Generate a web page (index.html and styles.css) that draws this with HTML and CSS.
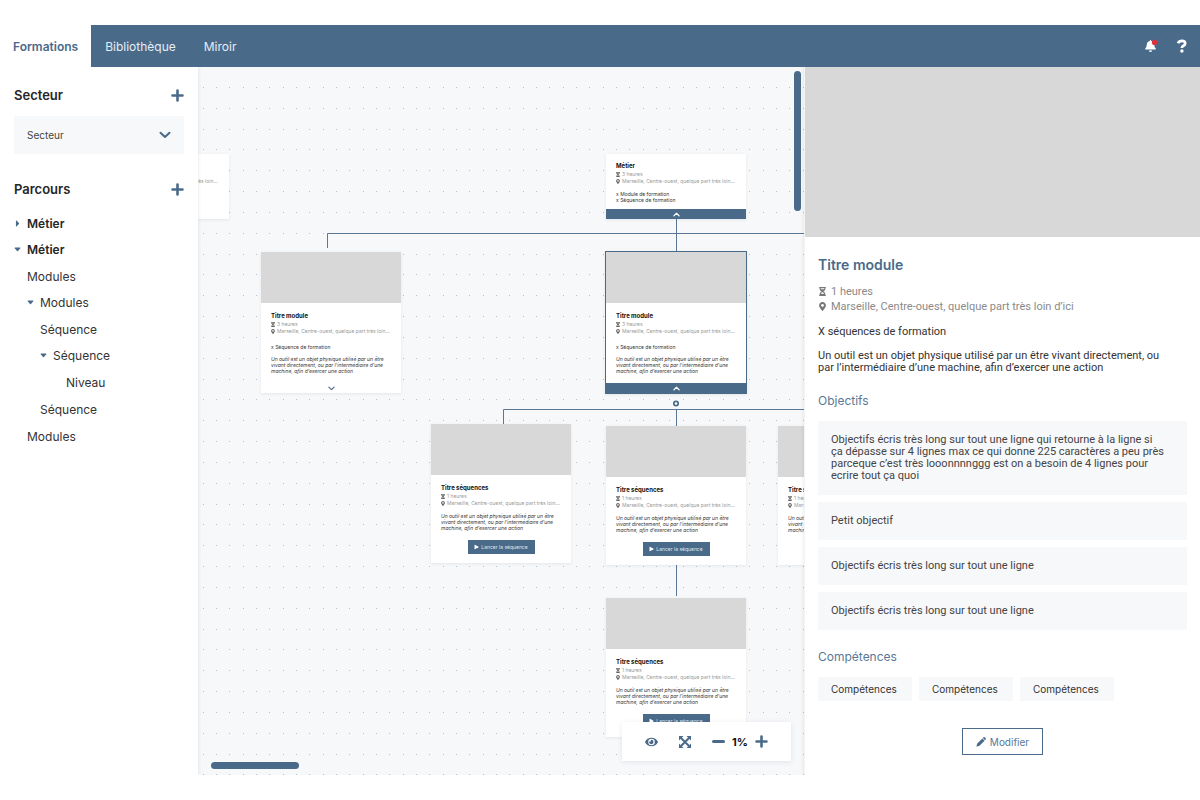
FILE: index.html
```html
<!DOCTYPE html>
<html lang="fr">
<head>
<meta charset="utf-8">
<meta name="viewport" content="width=device-width, initial-scale=1">
<title>Formations</title>
<link rel="stylesheet" href="styles.css">
</head>
<body>
<svg class="sprite" aria-hidden="true">
  <symbol id="plus" viewBox="0 0 12 12"><path d="M6 1.4v9.2M1.4 6h9.2" fill="none" stroke="currentColor" stroke-width="2.4" stroke-linecap="round"/></symbol>
  <symbol id="minus" viewBox="0 0 12 12"><path d="M1.4 6h9.2" fill="none" stroke="currentColor" stroke-width="2.800" stroke-linecap="round"/></symbol>
  <symbol id="down" viewBox="0 0 12 8"><path d="M1.5 1.7 6 6l4.500-4.300" fill="none" stroke="currentColor" stroke-width="2" stroke-linecap="round" stroke-linejoin="round"/></symbol>
  <symbol id="up" viewBox="0 0 12 8"><path d="M1.500 6.300 6 2l4.500 4.300" fill="none" stroke="currentColor" stroke-width="2.200" stroke-linecap="round" stroke-linejoin="round"/></symbol>
  <symbol id="caret-down" viewBox="0 0 8 6"><path d="M1.200.800h5.600q.8 0 .3.700L4.600 4.600q-.6.600-1.200 0L.900 1.500Q.4.800 1.200.800z" fill="currentColor"/></symbol>
  <symbol id="caret-right" viewBox="0 0 6 8"><path d="M1.200 1v6q0 .8.700.3l2.700-2.700q.6-.6 0-1.200L1.900.700Q1.200.200 1.200 1z" fill="currentColor"/></symbol>
  <symbol id="hourglass" viewBox="0 0 384 512"><path fill="currentColor" d="M360 64c13 0 24-11 24-24V24c0-13-11-24-24-24H24C11 0 0 11 0 24v16c0 13 11 24 24 24 0 91 51 167 121 192C75 281 24 357 24 448c-13 0-24 11-24 24v16c0 13 11 24 24 24h336c13 0 24-11 24-24v-16c0-13-11-24-24-24 0-91-51-167-121-192C309 231 360 155 360 64zM285 384H99c17-46 52-80 93-80s76 34 93 80zm0-256H99c-7-20-11-41-11-64h208c0 23-4 44-11 64z"/></symbol>
  <symbol id="pin" viewBox="0 0 384 512"><path fill="currentColor" fill-rule="evenodd" d="M172 502C27 291 0 270 0 192 0 86 86 0 192 0s192 86 192 192c0 78-27 99-172 310-9 13-31 13-40 0zM192 272a80 80 0 1 0 0-160 80 80 0 0 0 0 160z"/></symbol>
  <symbol id="play" viewBox="0 0 10 10"><path fill="currentColor" d="M1 .8Q1 0 1.800.400L9 4.400q.9.600 0 1.200L1.800 9.600Q1 10 1 9.200z"/></symbol>
  <symbol id="eye" viewBox="0 0 576 512"><path fill="currentColor" fill-rule="evenodd" d="M572 241C518 135 410 64 288 64S58 135 4 241a32 32 0 0 0 0 30c54 106 162 177 284 177s230-71 284-177a32 32 0 0 0 0-30zM288 400a144 144 0 1 1 0-288 144 144 0 0 1 0 288zm0-240c-13 0-25 2-37 6a48 48 0 0 1-67 67 96 96 0 1 0 104-73z"/></symbol>
  <symbol id="expand" viewBox="0 0 14 14"><path fill="none" stroke="currentColor" stroke-width="2" d="m3 3 8 8M11 3l-8 8"/><path fill="currentColor" d="M1 1h4.500L1 5.500zM13 1v4.500L8.500 1zM1 13V8.500L5.500 13zM13 13H8.500L13 8.500z"/></symbol>
  <symbol id="pencil" viewBox="0 0 12 12"><path fill="currentColor" d="M7.600 1.700 10.300 4.400 4.200 10.500l-3.200 1q-.6.100-.5-.5l1-3.200zM8.200 1.100l.8-.7q.8-.6 1.500 0l1.100 1.100q.6.700 0 1.500l-.7.800z"/></symbol>
</svg>

<div class="app">
  <header class="topbar">
    <nav class="tabs" aria-label="Principal">
      <a class="tab tab-active" href="#formations" aria-current="page">Formations</a>
      <a class="tab" href="#bibliotheque">Bibliothèque</a>
      <a class="tab" href="#miroir">Miroir</a>
    </nav>
    <div class="topbar-actions">
      <button class="icon-button" aria-label="Notifications">
        <svg class="icon-bell" viewBox="0 0 14 14"><path fill="#fff" d="M6.500 1q.7 0 .7.900 2.900.7 3 3.600.1 2.900 1.600 4.100.4.900-.5 1H1.700q-1-.2-.5-1 1.500-1.200 1.600-4.100.1-2.900 3-3.600 0-.9.700-.9zM4.900 11.500h3.200q-.2 1.600-1.600 1.600t-1.600-1.600z"/><circle cx="10.600" cy="3.400" r="2.700" fill="#e0303b"/></svg>
      </button>
      <button class="icon-button" aria-label="Aide">
        <svg class="icon-help" viewBox="0 0 12 14"><path fill="none" stroke="#fff" stroke-width="2.700" d="M2 4.300Q3 1.900 5.900 1.900q3.300 0 3.300 2.500 0 1.500-1.900 2.300Q5.900 7.400 5.900 9"/><circle cx="5.900" cy="12" r="1.700" fill="#fff"/></svg>
      </button>
    </div>
  </header>

  <div class="workspace">
    <aside class="sidebar">
      <div class="section-head">
        <h2 class="section-title"><label for="secteur">Secteur</label></h2>
        <button class="icon-button add" aria-label="Ajouter un secteur"><svg class="icon-plus"><use href="#plus"/></svg></button>
      </div>
      <div class="select-box">
        <select class="select" id="secteur"><option>Secteur</option></select>
        <svg class="select-arrow"><use href="#down"/></svg>
      </div>
      <div class="section-head">
        <h2 class="section-title">Parcours</h2>
        <button class="icon-button add" aria-label="Ajouter un parcours"><svg class="icon-plus"><use href="#plus"/></svg></button>
      </div>
      <ul class="tree">
        <li><button class="tree-row tree-strong" aria-expanded="false"><svg class="caret"><use href="#caret-right"/></svg>Métier</button></li>
        <li><button class="tree-row tree-strong" aria-expanded="true"><svg class="caret"><use href="#caret-down"/></svg>Métier</button>
          <ul class="branch">
            <li><button class="tree-row tree-leaf">Modules</button></li>
            <li><button class="tree-row" aria-expanded="true"><svg class="caret"><use href="#caret-down"/></svg>Modules</button>
              <ul class="branch">
                <li><button class="tree-row tree-leaf">Séquence</button></li>
                <li><button class="tree-row" aria-expanded="true"><svg class="caret"><use href="#caret-down"/></svg>Séquence</button>
                  <ul class="branch">
                    <li><button class="tree-row">Niveau</button></li>
                  </ul>
                </li>
                <li><button class="tree-row tree-leaf">Séquence</button></li>
              </ul>
            </li>
            <li><button class="tree-row tree-leaf">Modules</button></li>
          </ul>
        </li>
      </ul>
    </aside>

    <main class="canvas">
      <svg class="links" aria-hidden="true">
        <defs><pattern id="dots" width="40" height="125" patternUnits="userSpaceOnUse" x="5" y="20">
          <path stroke="#b9bfc6" stroke-width="1" stroke-dasharray="1 12 1 12 1 13" d="M0 .5h40M0 21.500h40M0 42.500h40M0 62.500h40M0 83.500h40M0 104.500h40"/>
        </pattern></defs>
        <rect width="100%" height="100%" fill="url(#dots)"/>
        <path class="wire" d="M478.500 152v32M129.500 181v-14.500H700M305.500 357v-14.500H700M478.500 342v17M478.500 498v31"/>
        <circle cx="478" cy="336.500" r="2.200" fill="#fff" stroke="#4a6a8a" stroke-width="1.700"/>
      </svg>

      <article class="node node-metier-a">
        <div class="node-body">
          <h3 class="node-title">Métier</h3>
          <p class="node-meta"><svg class="mini"><use href="#hourglass"/></svg>3 heures</p>
          <p class="node-meta"><svg class="mini"><use href="#pin"/></svg><span class="clip">Marseille, Centre-ouest, quelque part très loin d’ici</span></p>
          <p class="node-count">x Module de formation<br>x Séquence de formation</p>
        </div>
      </article>

      <article class="node node-metier-b">
        <div class="node-body">
          <h3 class="node-title">Métier</h3>
          <p class="node-meta"><svg class="mini"><use href="#hourglass"/></svg>3 heures</p>
          <p class="node-meta"><svg class="mini"><use href="#pin"/></svg><span class="clip">Marseille, Centre-ouest, quelque part très loin d’ici</span></p>
          <p class="node-count">x Module de formation<br>x Séquence de formation</p>
        </div>
        <button class="node-toggle node-toggle-open" aria-label="Replier"><svg class="mini-arrow"><use href="#up"/></svg></button>
      </article>

      <article class="node node-module-a">
        <div class="node-image"></div>
        <div class="node-body node-body-module">
          <h3 class="node-title">Titre module</h3>
          <p class="node-meta"><svg class="mini"><use href="#hourglass"/></svg>3 heures</p>
          <p class="node-meta"><svg class="mini"><use href="#pin"/></svg><span class="clip">Marseille, Centre-ouest, quelque part très loin d’ici</span></p>
          <p class="node-count">x Séquence de formation</p>
          <p class="node-text">Un outil est un objet physique utilisé par un être<br>vivant directement, ou par l’intermédiaire d’une<br>machine, afin d’exercer une action</p>
        </div>
        <button class="node-toggle" aria-label="Déplier"><svg class="mini-arrow"><use href="#down"/></svg></button>
      </article>

      <article class="node node-selected">
        <div class="node-image"></div>
        <div class="node-body node-body-module">
          <h3 class="node-title">Titre module</h3>
          <p class="node-meta"><svg class="mini"><use href="#hourglass"/></svg>3 heures</p>
          <p class="node-meta"><svg class="mini"><use href="#pin"/></svg><span class="clip">Marseille, Centre-ouest, quelque part très loin d’ici</span></p>
          <p class="node-count">x Séquence de formation</p>
          <p class="node-text">Un outil est un objet physique utilisé par un être<br>vivant directement, ou par l’intermédiaire d’une<br>machine, afin d’exercer une action</p>
        </div>
        <button class="node-toggle node-toggle-open" aria-label="Replier"><svg class="mini-arrow"><use href="#up"/></svg></button>
      </article>

      <article class="node node-seq-a">
        <div class="node-image"></div>
        <div class="node-body node-body-seq">
          <h3 class="node-title">Titre séquences</h3>
          <p class="node-meta"><svg class="mini"><use href="#hourglass"/></svg>1 heures</p>
          <p class="node-meta"><svg class="mini"><use href="#pin"/></svg><span class="clip">Marseille, Centre-ouest, quelque part très loin d’ici</span></p>
          <p class="node-text">Un outil est un objet physique utilisé par un être<br>vivant directement, ou par l’intermédiaire d’une<br>machine, afin d’exercer une action</p>
          <button class="launch"><svg class="mini"><use href="#play"/></svg>Lancer la séquence</button>
        </div>
      </article>

      <article class="node node-seq-b">
        <div class="node-image"></div>
        <div class="node-body node-body-seq">
          <h3 class="node-title">Titre séquences</h3>
          <p class="node-meta"><svg class="mini"><use href="#hourglass"/></svg>1 heures</p>
          <p class="node-meta"><svg class="mini"><use href="#pin"/></svg><span class="clip">Marseille, Centre-ouest, quelque part très loin d’ici</span></p>
          <p class="node-text">Un outil est un objet physique utilisé par un être<br>vivant directement, ou par l’intermédiaire d’une<br>machine, afin d’exercer une action</p>
          <button class="launch"><svg class="mini"><use href="#play"/></svg>Lancer la séquence</button>
        </div>
      </article>

      <article class="node node-seq-c">
        <div class="node-image"></div>
        <div class="node-body node-body-seq">
          <h3 class="node-title">Titre séquences</h3>
          <p class="node-meta"><svg class="mini"><use href="#hourglass"/></svg>1 heures</p>
          <p class="node-meta"><svg class="mini"><use href="#pin"/></svg><span class="clip">Marseille, Centre-ouest, quelque part très loin d’ici</span></p>
          <p class="node-text">Un outil est un objet physique utilisé par un être<br>vivant directement, ou par l’intermédiaire d’une<br>machine, afin d’exercer une action</p>
          <button class="launch"><svg class="mini"><use href="#play"/></svg>Lancer la séquence</button>
        </div>
      </article>

      <article class="node node-seq-d">
        <div class="node-image"></div>
        <div class="node-body node-body-seq">
          <h3 class="node-title">Titre séquences</h3>
          <p class="node-meta"><svg class="mini"><use href="#hourglass"/></svg>1 heures</p>
          <p class="node-meta"><svg class="mini"><use href="#pin"/></svg><span class="clip">Marseille, Centre-ouest, quelque part très loin d’ici</span></p>
          <p class="node-text">Un outil est un objet physique utilisé par un être<br>vivant directement, ou par l’intermédiaire d’une<br>machine, afin d’exercer une action</p>
          <button class="launch"><svg class="mini"><use href="#play"/></svg>Lancer la séquence</button>
        </div>
      </article>

      <div class="thumb thumb-y"></div>
      <div class="thumb thumb-x"></div>

      <div class="zoombar">
        <button class="icon-button" aria-label="Aperçu"><svg class="icon-eye"><use href="#eye"/></svg></button>
        <button class="icon-button" aria-label="Ajuster"><svg class="icon-expand"><use href="#expand"/></svg></button>
        <div class="zoom-level">
          <button class="icon-button" aria-label="Réduire"><svg class="icon-zoom"><use href="#minus"/></svg></button>
          <output class="zoom-value">1%</output>
          <button class="icon-button" aria-label="Agrandir"><svg class="icon-zoom"><use href="#plus"/></svg></button>
        </div>
      </div>
    </main>

    <aside class="panel">
      <div class="panel-image"></div>
      <div class="panel-body">
        <h2 class="panel-title">Titre module</h2>
        <p class="panel-meta"><svg class="meta-icon"><use href="#hourglass"/></svg>1 heures</p>
        <p class="panel-meta"><svg class="meta-icon"><use href="#pin"/></svg>Marseille, Centre-ouest, quelque part très loin d’ici</p>
        <p class="panel-text">X séquences de formation</p>
        <p class="panel-text">Un outil est un objet physique utilisé par un être vivant directement, ou<br>par l’intermédiaire d’une machine, afin d’exercer une action</p>
        <h3 class="panel-heading">Objectifs</h3>
        <ul class="goals">
          <li class="goal">Objectifs écris très long sur tout une ligne qui retourne à la ligne si<br>ça dépasse sur 4 lignes max ce qui donne 225 caractères a peu près<br>parceque c’est très looonnnnggg est on a besoin de 4 lignes pour<br>ecrire tout ça quoi</li>
          <li class="goal">Petit objectif</li>
          <li class="goal">Objectifs écris très long sur tout une ligne</li>
          <li class="goal">Objectifs écris très long sur tout une ligne</li>
        </ul>
        <h3 class="panel-heading">Compétences</h3>
        <ul class="skills">
          <li class="skill">Compétences</li>
          <li class="skill">Compétences</li>
          <li class="skill">Compétences</li>
        </ul>
        <button class="edit"><svg class="icon-pencil"><use href="#pencil"/></svg>Modifier</button>
      </div>
    </aside>
  </div>
</div>
</body>
</html>
```

FILE: styles.css
```css
* { box-sizing: border-box; }

body {
  margin: 0;
  background: #fff;
  color: #333;
  font-family: Inter, "Liberation Sans", sans-serif;
  font-size: 12px;
}

h2, h3, p, ul { margin: 0; padding: 0; }
ul { list-style: none; }
button, select { font: inherit; color: inherit; border: 0; padding: 0; background: none; cursor: pointer; }
svg { display: block; flex: none; }

.sprite { position: absolute; width: 0; height: 0; }

.app { display: flex; flex-direction: column; min-height: 100vh; padding: 25px 0; }

/* Top bar */
.topbar { display: flex; justify-content: space-between; min-height: 42px; background: #4a6a8a; }
.tabs { display: flex; }
.tab { display: flex; align-items: center; padding: 0 14px; color: #e6edf4; font-size: 12px; text-decoration: none; }
.tab-active { padding: 0 13px; background: #fff; color: #4a6a8a; font-weight: 600; }
.topbar-actions { display: flex; align-items: center; gap: 18px; padding-right: 12px; }
.icon-button { display: flex; align-items: center; justify-content: center; color: #4a6a8a; }
.icon-bell { width: 14px; height: 14px; }
.icon-help { width: 12px; height: 14px; }

.workspace { display: flex; flex: 1; }

/* Sidebar */
.sidebar { flex: none; width: 198px; padding: 18px 14px; background: #fff; box-shadow: 0 0 4px rgba(60, 80, 100, .16); clip-path: inset(0 -8px 0 0); z-index: 2; }
.section-head { display: flex; justify-content: space-between; align-items: center; height: 20px; }
.section-title { font-size: 13px; line-height: 20px; font-weight: 600; color: #262626; }
.icon-plus { width: 13px; height: 13px; }
.select-box { position: relative; margin: 11px 0 25px; }
.select { width: 100%; height: 38px; padding: 0 13px; appearance: none; background: #f7f8f9; font-size: 10px; color: #444; }
.select-arrow { position: absolute; right: 13px; top: 15px; width: 12px; height: 8px; color: #4a6a8a; pointer-events: none; }
.tree { margin-top: 11px; }
.branch { padding: 1px 0 1px 13px; }
.tree-row { display: flex; align-items: center; position: relative; height: 26px; padding-left: 13px; font-size: 12px; }
.tree-leaf { padding-left: 0; }
.tree-strong { font-weight: 600; color: #262626; }
.caret { position: absolute; left: 0; width: 7px; height: 7px; color: #4a6a8a; }

/* Canvas */
.canvas { position: relative; flex: 1; min-width: 0; overflow: hidden; background: #f7f8fa; }
.links { position: absolute; inset: 0; width: 100%; height: 100%; }
.wire { fill: none; stroke: #5a7896; stroke-width: 1; }

.node { position: absolute; width: 140px; background: #fff; box-shadow: 0 1px 3px rgba(60, 80, 100, .1); font-size: 5px; line-height: 6px; }
.node-metier-a { left: -109px; top: 87px; padding-bottom: 10px; }
.node-metier-b { left: 408px; top: 87px; }
.node-module-a { left: 63px; top: 185px; }
.node-selected { left: 407px; top: 184px; width: 142px; border: 1px solid #4a6a8a; }
.node-seq-a { left: 233px; top: 357px; }
.node-seq-b { left: 408px; top: 359px; }
.node-seq-c { left: 580px; top: 359px; }
.node-seq-d { left: 408px; top: 531px; }

.node-image { height: 51px; background: #d8d8d8; }
.node-body { display: flex; flex-direction: column; padding: 8px 10px 6px; }
.node-body-module { padding: 9px 10px; }
.node-body-seq { padding: 9px 10px; }
.node-title { margin-bottom: 1px; font-size: 6px; line-height: 8px; font-weight: 700; color: #111; }
.node-meta { display: flex; align-items: center; gap: 2px; line-height: 7px; color: #999; }
.mini { width: 4px; height: 5px; color: #666; }
.clip { min-width: 0; overflow: hidden; white-space: nowrap; text-overflow: ellipsis; }
.node-count { margin-top: 6px; }
.node-body-module .node-count { margin-top: 9px; }
.node-text { margin-top: 6px; font-style: italic; white-space: nowrap; }
.node-toggle { display: flex; align-items: center; justify-content: center; width: 100%; height: 10px; color: #4a6a8a; }
.node-toggle-open { background: #4a6a8a; color: #fff; }
.mini-arrow { width: 7px; height: 5px; }
.launch { display: flex; align-items: center; justify-content: center; align-self: center; gap: 2px; width: 67px; height: 14px; margin-top: 9px; background: #4a6a8a; color: #dfe7ef; }
.launch .mini { color: #fff; height: 6px; width: 5px; }

.thumb { position: absolute; background: #4a6a8a; border-radius: 4px; }
.thumb-y { right: 3px; top: 4px; width: 7px; height: 140px; }
.thumb-x { left: 13px; bottom: 6px; width: 88px; height: 7px; }

.zoombar { position: absolute; right: 13px; bottom: 14px; display: flex; align-items: center; gap: 20px; height: 39px; padding: 0 23px; background: #fff; box-shadow: 0 1px 5px rgba(60, 80, 100, .12); }
.icon-eye { width: 13px; height: 12px; }
.icon-expand { width: 14px; height: 14px; }
.icon-zoom { width: 13px; height: 13px; }
.zoom-level { display: flex; align-items: center; gap: 7px; }
.zoom-value { font-size: 11px; font-weight: 700; color: #111; }

/* Detail panel */
.panel { flex: none; width: 33%; border-left: 1px solid #f3f4f6; background: #fff; box-shadow: 0 0 4px rgba(60, 80, 100, .16); clip-path: inset(0 0 0 -8px); z-index: 2; }
.panel-image { height: 170px; background: #d8d8d8; }
.panel-body { display: flex; flex-direction: column; padding: 19px 13px; font-size: 10px; line-height: 12px; }
.panel-title { margin-bottom: 10px; font-size: 14px; line-height: 18px; font-weight: 600; color: #4a6a8a; }
.panel-meta { display: flex; align-items: center; gap: 4px; line-height: 15px; color: #8a8a8a; }
.meta-icon { width: 9px; height: 9px; color: #777; }
.panel-meta, .panel-text, .goal { font-family: Roboto, "Liberation Sans", sans-serif; font-size: 11px; }
.panel-text { margin-top: 12px; }
.panel-heading { margin: 19px 0 12px; font-size: 12px; line-height: 16px; font-weight: 400; color: #5a7896; }
.goals { display: grid; gap: 7px; }
.goal { padding: 13px 12px 13px 13px; background: #f7f8f9; color: #444; }
.skills { display: flex; gap: 7px; }
.skill { min-width: 94px; padding: 6px 13px; background: #f7f8f9; }
.edit { display: flex; align-items: center; justify-content: center; align-self: center; gap: 4px; height: 27px; margin-top: 27px; padding: 0 13px; border: 1px solid #4a6a8a; color: #5a7896; }
.icon-pencil { width: 10px; height: 10px; color: #4a6a8a; }
```
